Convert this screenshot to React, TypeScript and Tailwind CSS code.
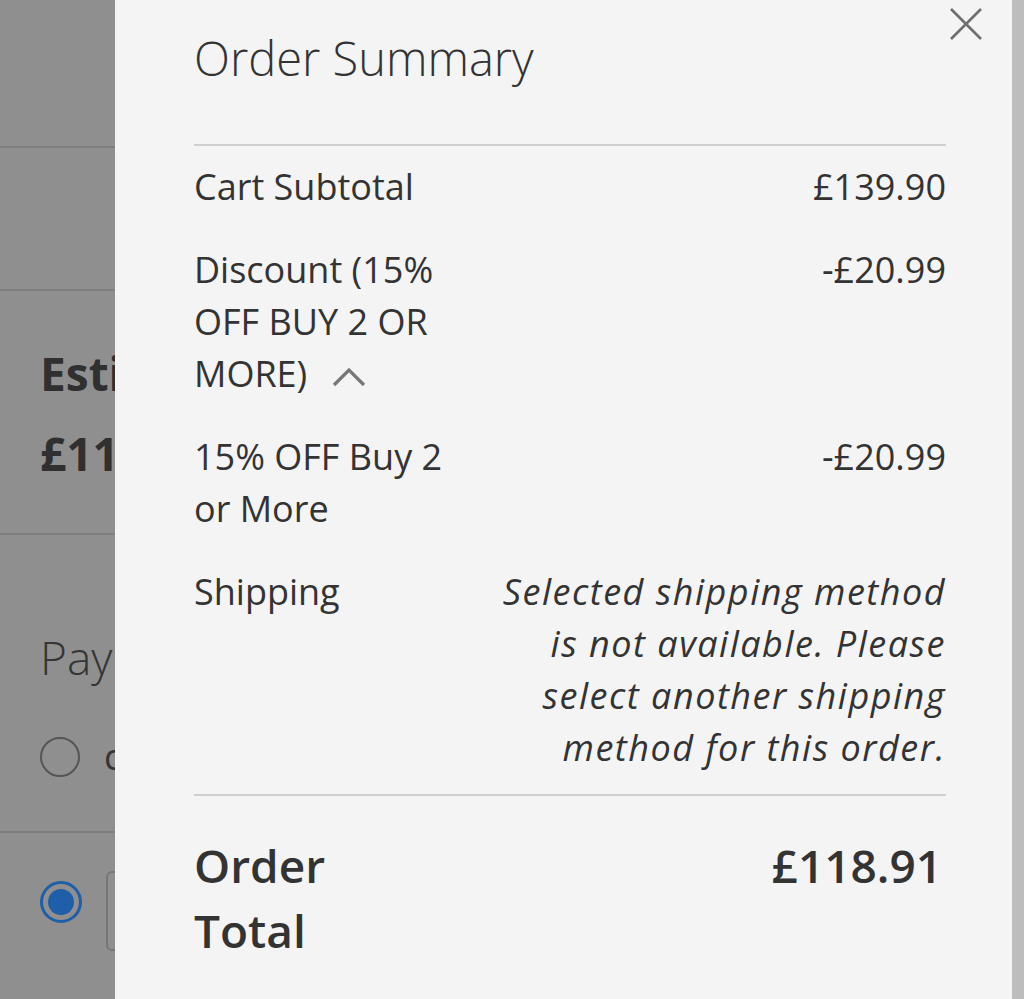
import React from "react";

const font = { fontFamily: '"Open Sans", "Noto Sans", "Liberation Sans", sans-serif' };

function Row({ label, value, labelClass = "" }: { label: React.ReactNode; value: React.ReactNode; labelClass?: string }) {
  return (
    <div className="flex items-start justify-between">
      <div className={"w-[280px] " + labelClass}>{label}</div>
      <div className="text-right">{value}</div>
    </div>
  );
}

export default function App() {
  return (
    <div style={font} className="relative h-[999px] w-[1024px] overflow-hidden bg-[#8f8f8f] text-[#333333]">
      {/* Background page (dimmed) */}
      <div className="flex flex-col">
        <div className="h-[148px] border-b-2 border-[#7e7e7e]" />
        <div className="h-[143px] border-b-2 border-[#7e7e7e]" />
        <div className="flex h-[244px] flex-col border-b-2 border-[#7e7e7e] pl-[40px] pt-[42px] text-[46px] font-bold leading-[80px] text-[#303030]">
          <div>Estimated Total</div>
          <div>£118.91</div>
        </div>
        <div className="flex h-[298px] flex-col border-b-2 border-[#7e7e7e] pl-[40px] pt-[92px]">
          <div className="text-[46px] font-light leading-[60px] text-[#353535]">Payment Method</div>
          <div className="mt-[43px] flex items-center gap-[24px]">
            <div className="h-[40px] w-[40px] rounded-full border-2 border-[#555555]" />
            <div className="text-[36px] text-[#353535]">check / money order</div>
          </div>
        </div>
        <div className="flex items-center gap-[24px] pl-[40px] pt-[38px]">
          <div className="mb-[18px] flex h-[42px] w-[42px] items-center justify-center rounded-full border-[3px] border-[#1f5ea8]">
            <div className="h-[26px] w-[26px] rounded-full bg-[#1f5ea8]" />
          </div>
          <div className="h-[80px] w-[200px] rounded-[6px] border-2 border-[#777777]" />
        </div>
      </div>

      {/* Right strip */}
      <div className="absolute right-0 top-0 h-full w-[12px] bg-[#bdbdbd]" />

      {/* Modal panel */}
      <div className="absolute bottom-0 left-[115px] top-0 w-[897px] bg-[#f4f4f4] pl-[79px] pr-[66px]">
        <button className="absolute right-[28px] top-[6px] flex h-[36px] w-[36px] items-center justify-center">
          <svg width="34" height="34" viewBox="0 0 34 34">
            <path d="M2 2 L32 32 M32 2 L2 32" stroke="#6e6e6e" strokeWidth="2.6" fill="none" />
          </svg>
        </button>

        <div className="pt-[30px] text-[47px] font-light leading-[56px] text-[#333333]">Order Summary</div>
        <div className="mt-[58px] h-[2px] bg-[#cfcfcf]" />

        <div className="flex flex-col gap-[31px] pt-[15px] text-[36px] leading-[52px]">
          <Row label="Cart Subtotal" value="£139.90" />
          <Row
            label={
              <span>
                Discount (15% OFF BUY 2 OR MORE)
                <svg className="ml-[25px] inline-block align-baseline" width="34" height="20" viewBox="0 0 34 20">
                  <path d="M2 18 L17 3 L32 18" stroke="#777777" strokeWidth="3.2" fill="none" />
                </svg>
              </span>
            }
            value="-£20.99"
          />
          <Row label="15% OFF Buy 2 or More" value="-£20.99" />
          <div className="flex items-start justify-between">
            <div>Shipping</div>
            <div className="w-[452px] text-right italic tracking-[1.5px]">
              Selected shipping method is not available. Please select another shipping method for this order.
            </div>
          </div>
        </div>

        <div className="mt-[20px] h-[2px] bg-[#cfcfcf]" />

        <div className="flex items-start justify-between pt-[37px] text-[46px] font-semibold leading-[65px]">
          <div className="w-[200px]">Order Total</div>
          <div className="pr-[4px] text-right">£118.91</div>
        </div>
      </div>
    </div>
  );
}
